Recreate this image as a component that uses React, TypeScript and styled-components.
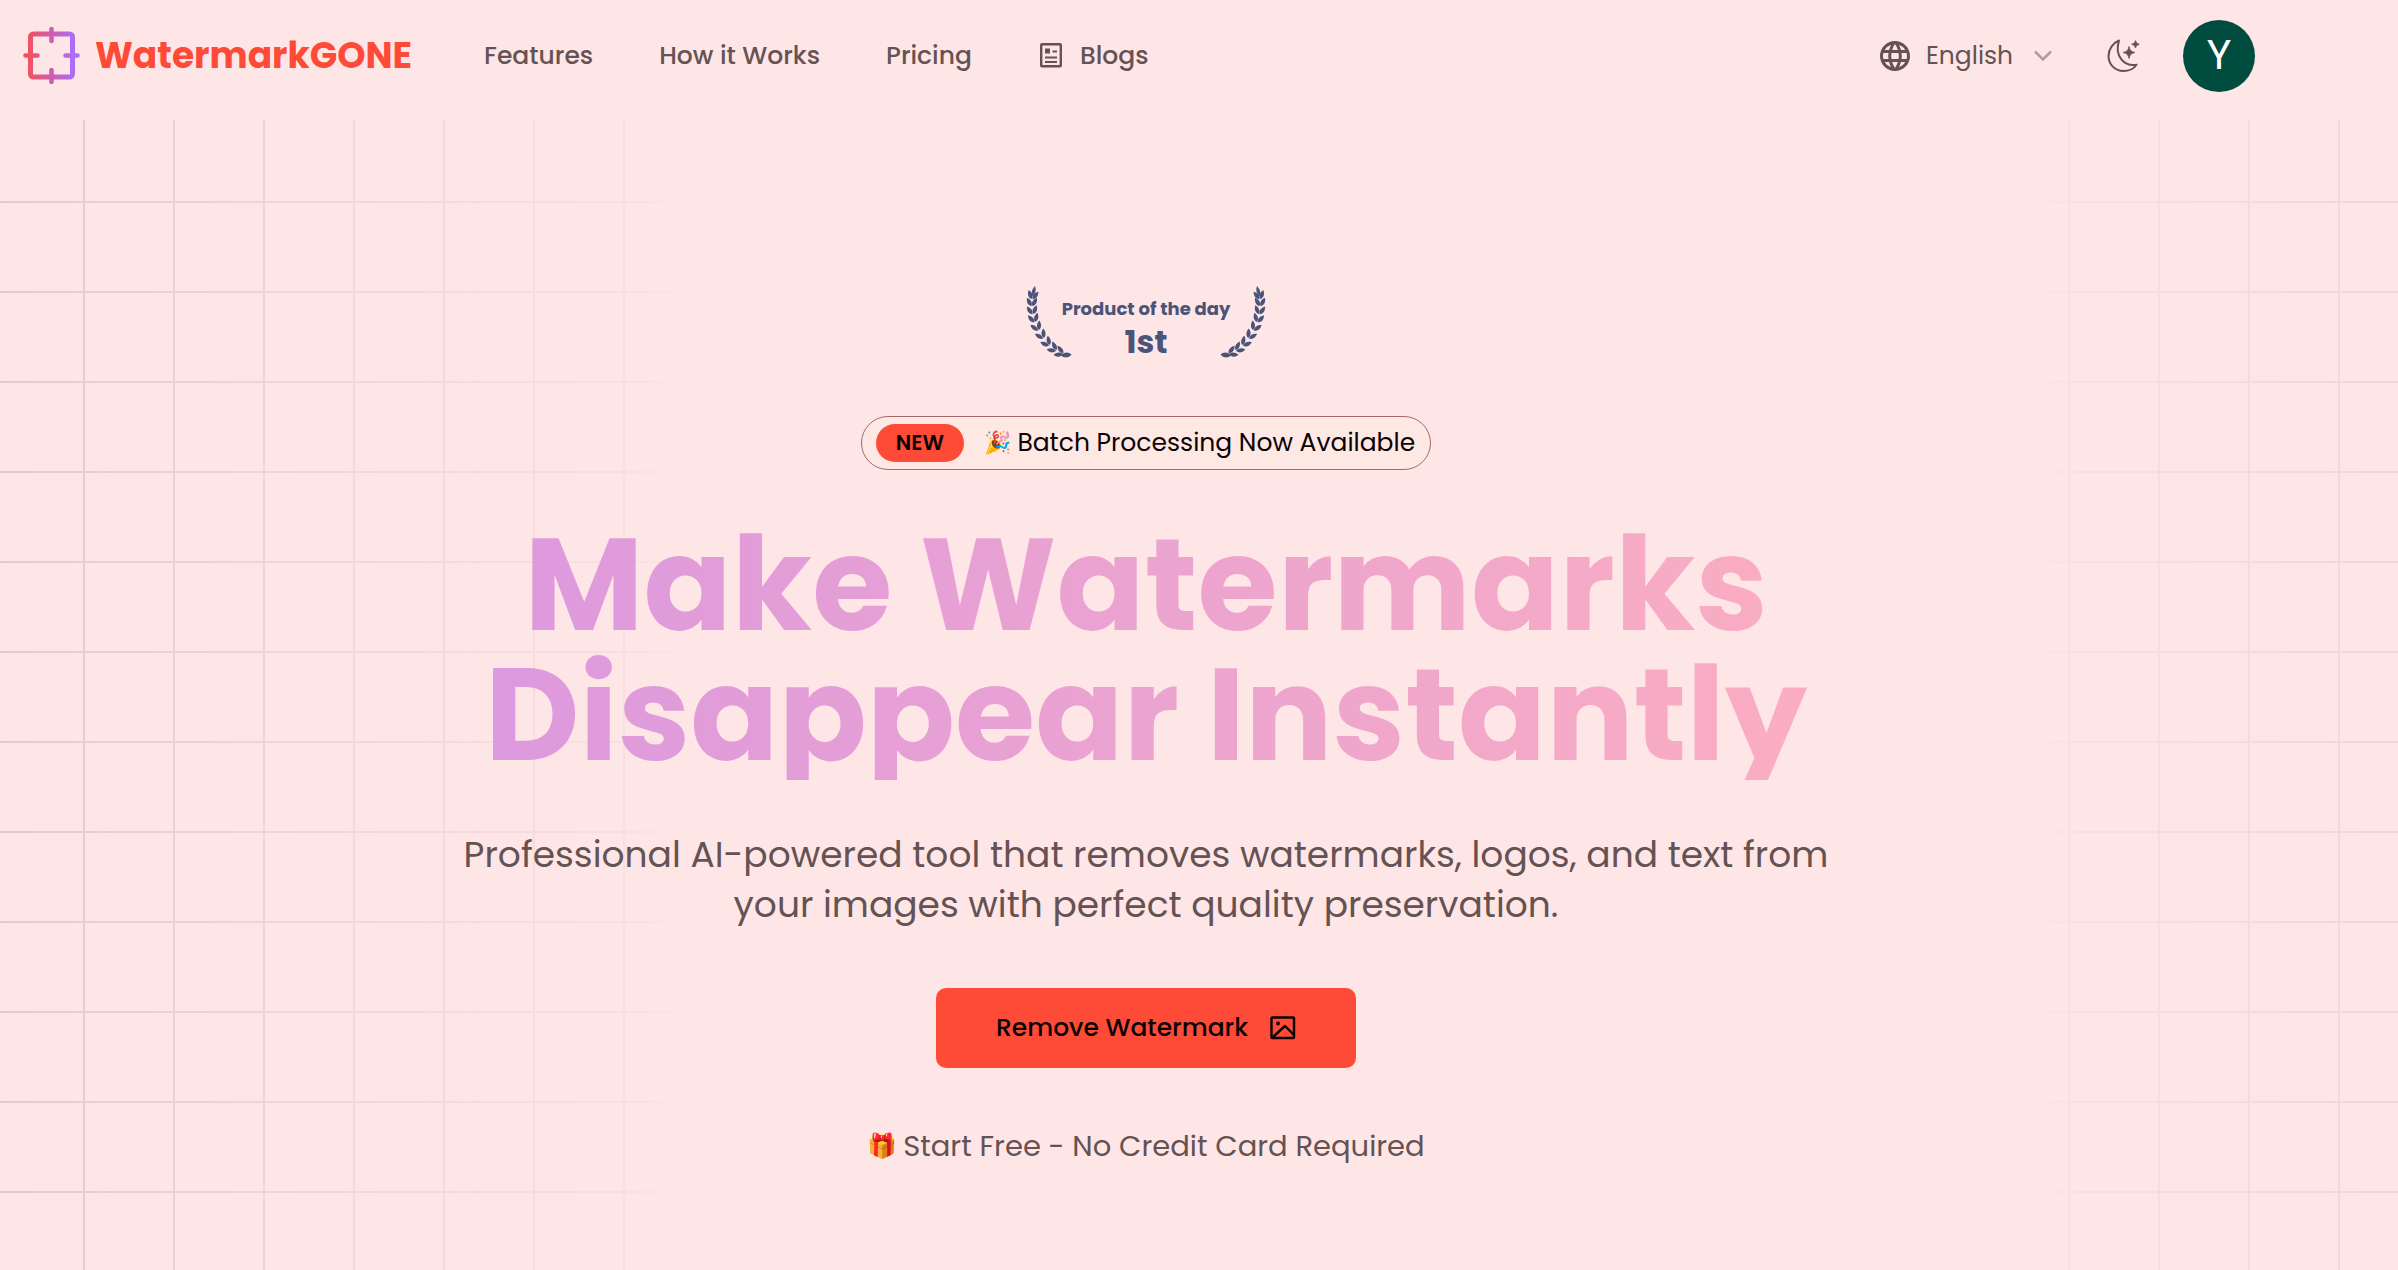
import React from "react";
import styled, { createGlobalStyle } from "styled-components";
import { MdLanguage } from "react-icons/md";

const GlobalStyle = createGlobalStyle`
  *, *::before, *::after { box-sizing: border-box; }
  body {
    margin: 0;
    background: #ffe6e6;
    color: #0c0404;
    font-family: Poppins, Inter, "Noto Sans", "Noto Color Emoji", sans-serif;
  }
`;

const Page = styled.div`
  min-height: 100vh;
  display: flex;
  flex-direction: column;
`;

const Header = styled.header`
  height: 120px;
  padding: 0 143px 8px 21px;
  display: flex;
  align-items: center;
  justify-content: space-between;
`;

const HeaderSide = styled.div`
  display: flex;
  align-items: center;
`;

const Brand = styled.a`
  display: flex;
  align-items: center;
  gap: 14px;
  margin-right: 72px;
  color: #fd4b38;
  font-size: 36px;
  line-height: 56px;
  font-weight: 700;
  text-decoration: none;
`;

const Nav = styled.nav`
  display: flex;
  align-items: center;
  gap: 66px;
`;

const NavLink = styled.a`
  display: flex;
  align-items: center;
  gap: 18px;
  color: #655253;
  font-size: 25px;
  line-height: 40px;
  font-weight: 500;
  text-decoration: none;
`;

const LanguagePicker = styled.label`
  display: flex;
  align-items: center;
  color: #655253;
`;

const LanguageSelect = styled.select`
  appearance: none;
  border: 0;
  margin: 0 20px 0 13px;
  padding: 0;
  background: transparent;
  color: inherit;
  font-family: inherit;
  font-size: 25px;
  line-height: 40px;
`;

const IconButton = styled.button`
  display: flex;
  border: 0;
  margin: 0 42px 0 55px;
  padding: 0;
  background: transparent;
  color: #655253;
  cursor: pointer;
`;

const Avatar = styled.button`
  width: 72px;
  height: 72px;
  border: 0;
  border-radius: 50%;
  padding: 0;
  background: #004d40;
  color: #fff;
  font-family: Roboto, sans-serif;
  font-size: 40px;
  line-height: 72px;
`;

const Hero = styled.main`
  position: relative;
  flex: 1;
  padding: 166px 106px 80px 0;
  display: flex;
  flex-direction: column;
  align-items: center;

  &::before,
  &::after {
    content: "";
    position: absolute;
    z-index: -1;
    top: 0;
    bottom: 0;
    background-image: linear-gradient(to right, #e6c9cc 2px, transparent 2px),
      linear-gradient(to bottom, #e6c9cc 2px, transparent 2px);
    background-size: 90px 90px;
  }
  &::before {
    left: 0;
    width: 700px;
    background-position: 83px 81px;
    mask-image: linear-gradient(to right, #000, rgba(0, 0, 0, 0.5) 50%, rgba(0, 0, 0, 0.25) 88%, transparent);
  }
  &::after {
    right: 0;
    width: 370px;
    background-position: 40px 81px;
    mask-image: linear-gradient(to left, rgba(0, 0, 0, 0.55), rgba(0, 0, 0, 0.2) 88%, transparent);
  }
`;

const Award = styled.div`
  display: flex;
  height: 74px;
  color: #4a5479;
`;

const AwardText = styled.div`
  display: flex;
  flex-direction: column;
  align-items: center;
  width: 148px;
  padding-top: 10px;
  white-space: nowrap;
  font-size: 18px;
  line-height: 26px;
  font-weight: 700;
`;

const AwardRank = styled.strong`
  font-size: 32px;
  line-height: 40px;
  font-weight: 700;
`;

const Announcement = styled.a`
  display: flex;
  align-items: center;
  gap: 20px;
  margin-top: 56px;
  height: 54px;
  padding: 0 15px 0 14px;
  border: 1px solid #a5686b;
  border-radius: 27px;
  background: #fde8e4;
  color: #0c0404;
  font-size: 25px;
  line-height: 40px;
  text-decoration: none;
`;

const AnnouncementText = styled.span`
  display: flex;
  align-items: center;
  gap: 6px;
`;

const NewTag = styled.span`
  border-radius: 19px;
  padding: 0 20px;
  background: #fd4b38;
  font-size: 21px;
  line-height: 38px;
  font-weight: 600;
`;

const Emoji = styled.span<{ $size: number }>`
  font-size: ${({ $size }) => $size}px;
  line-height: 40px;
`;

const Title = styled.h1`
  margin: 50px 0 0;
  max-width: 1400px;
  background: linear-gradient(to right, #dc99de, #faadc2);
  background-clip: text;
  color: transparent;
  text-align: center;
  font-size: 130px;
  line-height: 130px;
  font-weight: 700;
`;

const Lead = styled.p`
  margin: 50px 0 0;
  max-width: 1400px;
  color: #655253;
  text-align: center;
  font-size: 36px;
  line-height: 50px;
`;

const PrimaryButton = styled.button`
  display: flex;
  align-items: center;
  justify-content: center;
  gap: 22px;
  margin-top: 58px;
  width: 420px;
  height: 80px;
  border: 0;
  border-radius: 10px;
  background: #fd4b38;
  color: #0c0404;
  font-family: inherit;
  font-size: 25px;
  line-height: 40px;
  font-weight: 500;
`;

const Footnote = styled.p`
  display: flex;
  align-items: center;
  gap: 6px;
  margin: 58px 0 0;
  color: #655253;
  font-size: 29px;
  line-height: 40px;
`;

const Logo = () => (
  <svg width="60" height="60" viewBox="0 0 60 60" fill="none" stroke="url(#brand)" strokeLinecap="round" aria-hidden="true">
    <defs>
      <linearGradient id="brand" gradientUnits="userSpaceOnUse" x1="0" y1="30" x2="60" y2="30">
        <stop offset="0.1" stopColor="#f5505a" />
        <stop offset="0.85" stopColor="#ae6bf3" />
      </linearGradient>
    </defs>
    <rect x="9.500" y="8" width="42" height="43" rx="3" strokeWidth="5" />
    <path d="M30.500 3v12M30.500 44v12M4.500 29.500h12M44.500 29.500h12" strokeWidth="4.600" />
  </svg>
);

const ArticleIcon = () => (
  <svg width="24" height="26" viewBox="-2 0 24 26" fill="none" stroke="currentColor" strokeWidth="2.4" aria-hidden="true">
    <rect x="1.2" y="1.2" width="19.6" height="22" rx="0.8" />
    <path d="M5 14.500h12M5 18.900h12M12.500 8.500h4.500" strokeWidth="2" />
    <rect x="5" y="5.500" width="5" height="5" fill="currentColor" stroke="none" />
  </svg>
);

const ChevronIcon = () => (
  <svg width="18" height="12" viewBox="0 0 18 12" fill="none" stroke="#b39c9d" strokeWidth="2.5" aria-hidden="true">
    <path d="M1 1.500l8 8 8-8" />
  </svg>
);

const MoonIcon = () => (
  <svg width="34" height="34" viewBox="0 0 34 34" aria-hidden="true">
    <path
      d="M12 1.500C6 4 1.500 10 1.500 17C1.500 25.300 8 32 16.300 32C22 32 27 29.500 29.500 25.700C17.500 27.500 7 17.500 12 1.500Z"
      fill="none"
      stroke="currentColor"
      strokeWidth="2"
      strokeLinejoin="round"
    />
    <path
      d="M22 7.500Q22.700 12.800 28 13.500Q22.700 14.200 22 19.500Q21.300 14.200 16 13.500Q21.300 12.800 22 7.500ZM28.500 1.500Q29 4.800 32.300 5.300Q29 5.800 28.500 9Q28 5.800 24.700 5.300Q28 4.800 28.500 1.500Z"
      fill="currentColor"
      stroke="currentColor"
      strokeWidth="0.8"
    />
  </svg>
);

const PictureIcon = () => (
  <svg width="26" height="24" viewBox="0 0 26 24" fill="none" stroke="currentColor" strokeWidth="2.4" strokeLinejoin="round" aria-hidden="true">
    <rect x="1.500" y="1.500" width="22.500" height="20.500" rx="0.8" />
    <path d="M3 21L15 10L23.500 18.500" />
    <circle cx="8" cy="7.500" r="2" fill="currentColor" stroke="none" />
  </svg>
);

const STEM = [
  [38, 68],
  [31, 65],
  [24, 60],
  [18, 53],
  [13, 45],
  [9, 37],
  [7, 29],
  [6, 21],
  [6, 14],
  [7, 8],
];

const Laurel = ({ mirrored = false }: { mirrored?: boolean }) => (
  <svg width="46" height="74" viewBox="0 0 46 74" fill="currentColor" overflow="visible" aria-hidden="true">
    <g transform={mirrored ? "translate(46 0) scale(-1 1)" : undefined}>
      <path d="M35 69.500C38 65.500 43 66 45.500 68.500C43 72 38 72.500 35 69.500Z" />
      {STEM.slice(0, -1).map(([x, y], i) => {
        const [nx, ny] = STEM[i + 1];
        const angle = (Math.atan2(ny - y, nx - x) * 180) / Math.PI;
        return [-28, 28].map((turn) => (
          <path
            key={`${i}${turn}`}
            d="M1 0C3.500 -3 7 -2.800 10.500 0C7 2.600 3.500 2.600 1 0Z"
            transform={`translate(${x} ${y}) rotate(${angle + turn})`}
          />
        ));
      })}
      <path d="M5.500 11Q4.500 5 9 0Q11.500 6 5.500 11Z" />
    </g>
  </svg>
);

export default function App() {
  return (
    <Page>
      <GlobalStyle />
      <Header>
        <HeaderSide>
          <Brand href="#">
            <Logo />
            WatermarkGONE
          </Brand>
          <Nav aria-label="Main">
            <NavLink href="#features">Features</NavLink>
            <NavLink href="#how">How it Works</NavLink>
            <NavLink href="#pricing">Pricing</NavLink>
            <NavLink href="#blogs">
              <ArticleIcon />
              Blogs
            </NavLink>
          </Nav>
        </HeaderSide>
        <HeaderSide>
          <LanguagePicker>
            <MdLanguage size={36} aria-hidden="true" />
            <LanguageSelect aria-label="Language" defaultValue="en">
              <option value="en">English</option>
            </LanguageSelect>
            <ChevronIcon />
          </LanguagePicker>
          <IconButton type="button" aria-label="Toggle dark mode">
            <MoonIcon />
          </IconButton>
          <Avatar type="button">Y</Avatar>
        </HeaderSide>
      </Header>
      <Hero>
        <Award>
          <Laurel />
          <AwardText>
            Product of the day
            <AwardRank>1st</AwardRank>
          </AwardText>
          <Laurel mirrored />
        </Award>
        <Announcement href="#batch">
          <NewTag>NEW</NewTag>
          <AnnouncementText>
            <Emoji $size={22}>🎉</Emoji>
            Batch Processing Now Available
          </AnnouncementText>
        </Announcement>
        <Title>
          Make Watermarks
          <br />
          Disappear Instantly
        </Title>
        <Lead>
          Professional AI-powered tool that removes watermarks, logos, and text from
          <br />
          your images with perfect quality preservation.
        </Lead>
        <PrimaryButton type="button">
          Remove Watermark
          <PictureIcon />
        </PrimaryButton>
        <Footnote>
          <Emoji $size={24}>🎁</Emoji>
          Start Free - No Credit Card Required
        </Footnote>
      </Hero>
    </Page>
  );
}
